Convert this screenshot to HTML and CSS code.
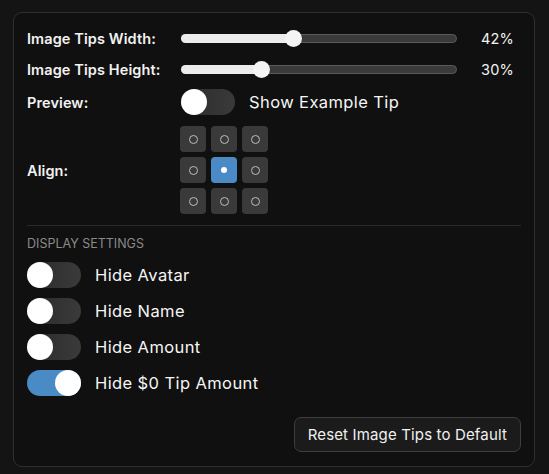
FILE: index.html
```html
<!DOCTYPE html>
<html>
<head>
<meta charset="utf-8">
<link rel="stylesheet" href="styles.css">
</head>
<body>
<div class="panel">
  <div class="row slider-row">
    <div class="label">Image Tips Width:</div>
    <div class="slider"><div class="fill" style="width:40.5%"></div><div class="thumb" style="left:40.5%"></div></div>
    <div class="value">42%</div>
  </div>
  <div class="row slider-row second">
    <div class="label">Image Tips Height:</div>
    <div class="slider"><div class="fill" style="width:29%"></div><div class="thumb" style="left:29%"></div></div>
    <div class="value">30%</div>
  </div>
  <div class="row preview-row">
    <div class="label">Preview:</div>
    <div class="toggle"><div class="knob"></div></div>
    <div class="toggle-text">Show Example Tip</div>
  </div>
  <div class="row align-row">
    <div class="label">Align:</div>
    <div class="grid">
      <div class="cell"><span class="ring"></span></div>
      <div class="cell"><span class="ring"></span></div>
      <div class="cell"><span class="ring"></span></div>
      <div class="cell"><span class="ring"></span></div>
      <div class="cell active"><span class="dot"></span></div>
      <div class="cell"><span class="ring"></span></div>
      <div class="cell"><span class="ring"></span></div>
      <div class="cell"><span class="ring"></span></div>
      <div class="cell"><span class="ring"></span></div>
    </div>
  </div>
  <div class="divider"></div>
  <div class="section-title">DISPLAY SETTINGS</div>
  <div class="toggles">
    <div class="toggle-row"><div class="toggle"><div class="knob"></div></div><div class="toggle-text">Hide Avatar</div></div>
    <div class="toggle-row"><div class="toggle"><div class="knob"></div></div><div class="toggle-text">Hide Name</div></div>
    <div class="toggle-row"><div class="toggle"><div class="knob"></div></div><div class="toggle-text">Hide Amount</div></div>
    <div class="toggle-row"><div class="toggle on"><div class="knob"></div></div><div class="toggle-text">Hide $0 Tip Amount</div></div>
  </div>
  <div class="actions">
    <button class="reset">Reset Image Tips to Default</button>
  </div>
</div>
<div class="next-panel"></div>
</body>
</html>
```
FILE: styles.css
```css
html, body {
  margin: 0;
  padding: 0;
  background: #141414;
  height: 474px;
  overflow: hidden;
}
body {
  font-family: "Inter", "Liberation Sans", sans-serif;
  color: #f2f2f2;
  padding: 12px 14px 0 13px;
  box-sizing: border-box;
}
.panel {
  width: 522px;
  box-sizing: border-box;
  background: #101010;
  border: 1px solid #2f2f2f;
  border-radius: 9px;
  padding: 13px 13px 14px 13px;
}
.row {
  display: flex;
  align-items: center;
}
.label {
  width: 154px;
  flex: none;
  font-size: 14.5px;
  font-weight: 600;
  letter-spacing: 0.1px;
  white-space: nowrap;
}
.slider-row {
  height: 24px;
}
.slider-row.second {
  margin-top: 7px;
}
.slider {
  position: relative;
  flex: 1;
  height: 9px;
  box-sizing: border-box;
  border-radius: 5px;
  background: #3a3a3a;
  border: 1px solid #5a5a5a;
}
.fill {
  position: absolute;
  left: -1px;
  top: -1px;
  bottom: -1px;
  background: #ececec;
  border-radius: 5px;
}
.thumb {
  position: absolute;
  top: 50%;
  width: 17px;
  height: 17px;
  margin-left: -8px;
  margin-top: -8.5px;
  border-radius: 50%;
  background: #f4f4f4;
}
.value {
  width: 64px;
  flex: none;
  text-align: right;
  padding-right: 7px;
  box-sizing: border-box;
  font-size: 14.5px;
  letter-spacing: 0.2px;
}
.preview-row {
  margin-top: 8px;
  height: 26px;
}
.toggle {
  position: relative;
  width: 54px;
  height: 26px;
  flex: none;
  border-radius: 13px;
  background: linear-gradient(90deg, #2a2a2a, #3a3a3a);
}
.toggle .knob {
  position: absolute;
  left: 0;
  top: 0;
  width: 26px;
  height: 26px;
  border-radius: 50%;
  background: #ffffff;
}
.toggle.on {
  background: #4a8bc6;
}
.toggle.on .knob {
  left: 28px;
}
.toggle-text {
  margin-left: 14px;
  font-size: 16.5px;
  letter-spacing: 0.4px;
  color: #f6f6f6;
  white-space: nowrap;
}
.align-row {
  margin-top: 11px;
}
.grid {
  display: grid;
  grid-template-columns: repeat(3, 26px);
  grid-auto-rows: 26px;
  gap: 5px;
  margin-left: -1px;
}
.cell {
  background: #3a3a3a;
  border-radius: 4px;
  display: flex;
  align-items: center;
  justify-content: center;
}
.cell.active {
  background: #4a8bc6;
}
.ring {
  width: 9px;
  height: 9px;
  box-sizing: border-box;
  border: 1px solid #bdbdbd;
  border-radius: 50%;
}
.dot {
  width: 6px;
  height: 6px;
  border-radius: 50%;
  background: #ffffff;
}
.divider {
  margin-top: 11px;
  height: 1px;
  background: #2a2a2a;
}
.section-title {
  margin-top: 10px;
  font-size: 12.5px;
  color: #8a8a8a;
  letter-spacing: 0;
}
.toggles {
  margin-top: 11px;
  display: flex;
  flex-direction: column;
  gap: 10px;
}
.toggle-row {
  display: flex;
  align-items: center;
}
.actions {
  display: flex;
  justify-content: flex-end;
  margin-top: 21px;
}
.reset {
  font-family: inherit;
  font-size: 15px;
  letter-spacing: 0.15px;
  color: #f0f0f0;
  background: #1b1b1b;
  border: 1px solid #3e3e3e;
  border-radius: 7px;
  height: 35px;
  padding: 0 13px;
}
.next-panel {
  margin-top: 9px;
  width: 522px;
  height: 2px;
  background: #2e2e2e;
}
```
